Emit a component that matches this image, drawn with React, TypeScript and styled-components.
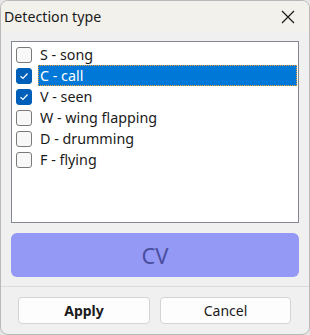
import styled, { createGlobalStyle } from "styled-components";

const Global = createGlobalStyle`
  html, body {
    margin: 0;
    padding: 0;
    background: #e6e6e6;
    overflow: hidden;
  }
  * {
    box-sizing: border-box;
  }
`;

const Window = styled.div`
  width: 310px;
  height: 335px;
  display: flex;
  flex-direction: column;
  background: #f0f0f0;
  border: 1px solid #b9b9b9;
  border-radius: 8px;
  overflow: hidden;
  font-family: "Noto Sans", "Open Sans", sans-serif;
  color: #1a1a1a;
`;

const TitleBar = styled.div`
  height: 31px;
  display: flex;
  align-items: center;
  justify-content: space-between;
  padding: 0 10px 0 3px;
  background: #f3f1ec;
  font-size: 14.2px;
`;

const Close = styled.svg`
  width: 14px;
  height: 14px;
  margin-right: 4px;
`;

const Body = styled.div`
  padding: 9px 10px 0 10px;
  display: flex;
  flex-direction: column;
  gap: 10px;
`;

const ListBox = styled.ul`
  margin: 0;
  padding: 2px 1px 0 4px;
  list-style: none;
  height: 182px;
  background: #fff;
  border: 1px solid #828790;
`;

const Item = styled.li`
  height: 21px;
  display: flex;
  align-items: center;
  gap: 6px;
  font-size: 14.3px;
`;

const Label = styled.span<{ $selected?: boolean }>`
  flex: 1;
  height: 100%;
  display: flex;
  align-items: center;
  padding-left: 2px;
  background: ${(p) => (p.$selected ? "#0078d7" : "transparent")};
  color: ${(p) => (p.$selected ? "#fff" : "#1a1a1a")};
  outline: ${(p) => (p.$selected ? "1px dotted #f0a030" : "none")};
  outline-offset: -1px;
`;

const Box = styled.span<{ $checked?: boolean }>`
  width: 16px;
  height: 16px;
  flex: none;
  border-radius: 3px;
  display: flex;
  align-items: center;
  justify-content: center;
  border: 1px solid ${(p) => (p.$checked ? "#005fb8" : "#7a7a7a")};
  background: ${(p) => (p.$checked ? "#005fb8" : "#f8f8f8")};
`;

const CVButton = styled.div`
  height: 44px;
  border-radius: 6px;
  background: #9499f5;
  color: #4a4f9f;
  font-size: 22px;
  display: flex;
  align-items: center;
  justify-content: center;
`;

const Footer = styled.div`
  margin-top: 9px;
  border-top: 1px solid #dcdcdc;
  display: grid;
  grid-template-columns: 132px 131px;
  gap: 10px;
  padding: 10px 0 0 17px;
`;

const Button = styled.button<{ $primary?: boolean }>`
  height: 27px;
  border: 1px solid #d4d4d4;
  border-radius: 4px;
  background: #fdfdfd;
  font-family: inherit;
  font-size: 14px;
  font-weight: ${(p) => (p.$primary ? 700 : 400)};
  color: #1a1a1a;
`;

const items = [
  { label: "S - song", checked: false },
  { label: "C - call", checked: true, selected: true },
  { label: "V - seen", checked: true },
  { label: "W - wing flapping", checked: false },
  { label: "D - drumming", checked: false },
  { label: "F - flying", checked: false },
];

export default function App() {
  return (
    <>
      <Global />
      <Window>
        <TitleBar>
          <span>Detection type</span>
          <Close viewBox="0 0 14 14">
            <path d="M1 1 L13 13 M13 1 L1 13" stroke="#1a1a1a" strokeWidth="1.2" fill="none" />
          </Close>
        </TitleBar>
        <Body>
          <ListBox>
            {items.map((it) => (
              <Item key={it.label}>
                <Box $checked={it.checked}>
                  {it.checked && (
                    <svg width="10" height="10" viewBox="0 0 10 10">
                      <path d="M1.5 5.2 L4 7.5 L8.5 2.5" stroke="#fff" strokeWidth="1.2" fill="none" />
                    </svg>
                  )}
                </Box>
                <Label $selected={it.selected}>{it.label}</Label>
              </Item>
            ))}
          </ListBox>
          <CVButton>CV</CVButton>
        </Body>
        <Footer>
          <Button $primary>Apply</Button>
          <Button>Cancel</Button>
        </Footer>
      </Window>
    </>
  );
}
